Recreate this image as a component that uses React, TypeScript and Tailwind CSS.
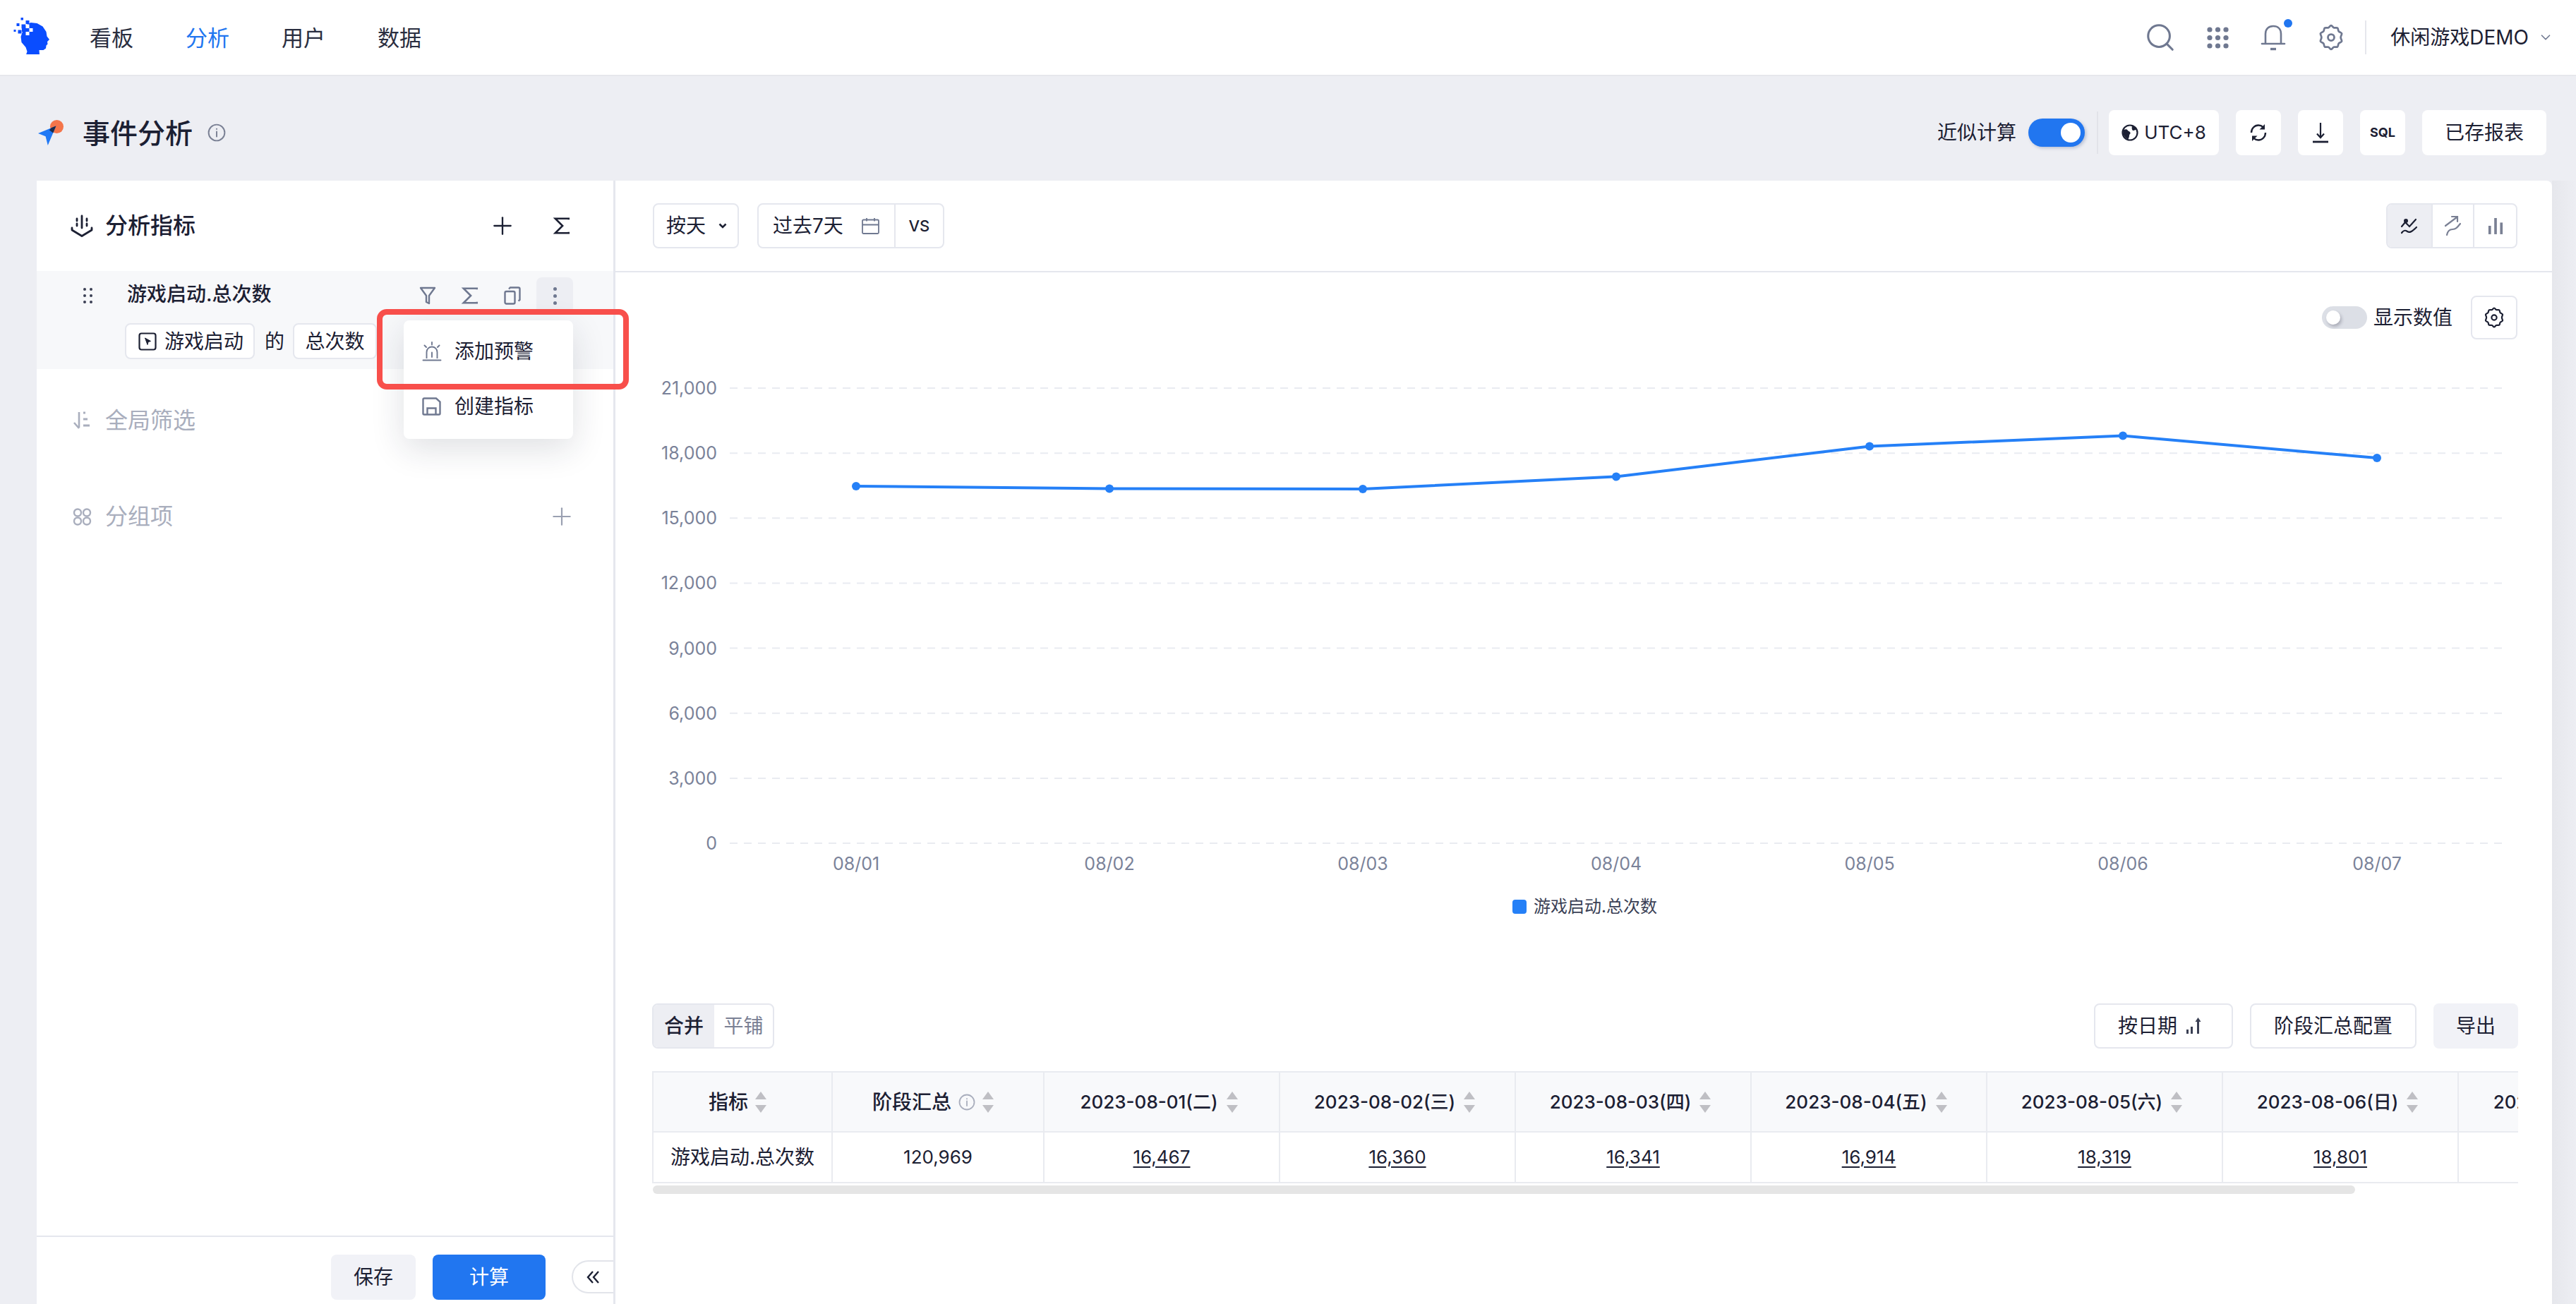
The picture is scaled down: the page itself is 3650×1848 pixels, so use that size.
import { ChevronDown, Plus, Search } from "lucide-react";

const points = [
  { label: "08/01", x: 341, y: 208 },
  { label: "08/02", x: 700, y: 211.5 },
  { label: "08/03", x: 1059, y: 212 },
  { label: "08/04", x: 1418, y: 194.5 },
  { label: "08/05", x: 1777, y: 151.5 },
  { label: "08/06", x: 2136, y: 136.5 },
  { label: "08/07", x: 2496, y: 168 },
];

const yTicks = ["21,000", "18,000", "15,000", "12,000", "9,000", "6,000", "3,000", "0"];

const dateColumns = [
  { date: "2023-08-01(二)", value: "16,467" },
  { date: "2023-08-02(三)", value: "16,360" },
  { date: "2023-08-03(四)", value: "16,341" },
  { date: "2023-08-04(五)", value: "16,914" },
  { date: "2023-08-05(六)", value: "18,319" },
  { date: "2023-08-06(日)", value: "18,801" },
  { date: "2023-08-07(一)", value: "17,778" },
];

function Logo() {
  return (
    <svg width="60" height="60" viewBox="8 2 60 60" className="mb-[12px] shrink-0">
      <path
        fill="#0a4dff"
        d="M27 62.500h19l-.5-6.500h6l3.500-2.500.5-4 2-2-.5-3.500 3-3-3.500-4.500-1-6.500-5-7.500-8-4.500-9-1-6 3-5 8-3 9 1 8 6 7 2 6z"
      />
      <g fill="#0a4dff">
        <rect x="19.500" y="10" width="3.500" height="3.500" />
        <rect x="13.500" y="18" width="4" height="4" />
        <rect x="9.500" y="27" width="3" height="3" />
        <rect x="15.500" y="27.500" width="5" height="5" />
        <rect x="26.500" y="14" width="5" height="5" />
        <rect x="20.500" y="19.500" width="6" height="6" />
      </g>
      <g fill="#fff">
        <rect x="26.500" y="19.500" width="5" height="5.500" />
        <rect x="31.500" y="25" width="5" height="5" />
        <rect x="26.500" y="30" width="5" height="5" />
      </g>
      <rect x="21" y="25" width="5.500" height="5" fill="#0a4dff" />
    </svg>
  );
}

function PageIcon() {
  return (
    <svg width="36" height="36" viewBox="0 0 34 34" className="shrink-0">
      <circle cx="25" cy="9" r="9" fill="#f4754a" />
      <path d="M0 18 24 8l-11 26-3-12z" fill="#1f78f5" />
      <path d="M18 10.500 24 8l-4 9.500-5-4z" fill="#1c2b4a" />
    </svg>
  );
}

function InfoIcon({ size = 26, color = "#7a8094" }: { size?: number; color?: string }) {
  return (
    <svg width={size} height={size} viewBox="0 0 24 24" fill="none" stroke={color} strokeWidth="1.800" className="shrink-0">
      <circle cx="12" cy="12" r="10.500" />
      <path d="M12 10.500V17" strokeLinecap="round" />
      <circle cx="12" cy="7.200" r="1" fill={color} stroke="none" />
    </svg>
  );
}

function GearIcon({ size = 40, color = "#6f7890" }: { size?: number; color?: string }) {
  return (
    <svg width={size} height={size} viewBox="0 0 32 32" fill="none" stroke={color} strokeWidth="2.200" strokeLinejoin="round">
      <path d="M16 2.500c1.200 0 1.800 2 3 2.500 1.400.6 3.200-.4 4.200.3 1 .8.6 2.800 1.400 3.800.9 1.100 3 1.200 3.400 2.400.4 1.200-1.100 2.600-1.100 4.500s1.500 3.300 1.100 4.500c-.4 1.200-2.500 1.300-3.400 2.400-.8 1-.4 3-1.400 3.800-1 .7-2.800-.3-4.200.3-1.200.5-1.800 2.500-3 2.500s-1.800-2-3-2.500c-1.400-.6-3.200.4-4.200-.3-1-.8-.6-2.800-1.400-3.800-.9-1.100-3-1.200-3.400-2.400-.4-1.200 1.100-2.600 1.100-4.500s-1.500-3.300-1.100-4.500c.4-1.200 2.500-1.300 3.400-2.400.8-1 .4-3 1.400-3.800 1-.7 2.800.3 4.200-.3 1.200-.5 1.800-2.500 3-2.500z" />
      <circle cx="16" cy="16" r="3.600" />
    </svg>
  );
}

function GridDots() {
  const dots = [];
  for (let r = 0; r < 3; r++) {
    for (let c = 0; c < 3; c++) {
      dots.push(<circle key={`${r}-${c}`} cx={4 + c * 11.5} cy={4 + r * 11.5} r="3.600" fill="#6f7890" />);
    }
  }
  return (
    <svg width="31" height="31" viewBox="0 0 31 31">
      {dots}
    </svg>
  );
}

function BellIcon() {
  return (
    <div className="relative h-[38px] w-[36px]">
      <svg width="36" height="38" viewBox="0 0 36 38" fill="none" stroke="#6f7890" strokeWidth="2.600">
        <path d="M7 27V14C7 7 11.500 3 18 3s11 4 11 11v13" />
        <path d="M2 28h32" strokeLinecap="round" />
        <path d="M14 35.500h8" strokeWidth="3.400" />
      </svg>
      <span className="absolute right-[-9px] top-[-7px] h-[12px] w-[12px] rounded-full bg-[#2176f0]" />
    </div>
  );
}

function Funnel({ color }: { color: string }) {
  return (
    <svg width="24" height="26" viewBox="0 0 24 26" fill="none" stroke={color} strokeWidth="2.400" strokeLinejoin="round">
      <path d="M2 2h20l-8 11v11l-4-2v-9z" />
    </svg>
  );
}

function Sigma({ color, size = 26 }: { color: string; size?: number }) {
  return (
    <svg width={size} height={size} viewBox="0 0 24 24" fill="none" stroke={color} strokeWidth="2.400" strokeLinejoin="miter">
      <path d="M21 4V2.500H3.500L13 12l-9.500 9.500H21V20" />
    </svg>
  );
}

function CopyIcon() {
  return (
    <svg width="24" height="26" viewBox="0 0 24 26" fill="none" stroke="#6f7890" strokeWidth="2.400">
      <rect x="1.500" y="7" width="14" height="17.500" rx="2" />
      <path d="M7 3.500 9 1.500h11.500a2 2 0 0 1 2 2V19l-2 1.500" />
    </svg>
  );
}

function MetricIcon({ color }: { color: string }) {
  return (
    <svg width="32" height="32" viewBox="0 0 32 32" fill="none" stroke={color} strokeWidth="2.800" strokeLinecap="round">
      <path d="M16 2v17" />
      <path d="M9 6v3M9 13v3M23 6v3M23 13v3" />
      <path d="M2 19v3l14 8.500L30 22v-3" strokeLinejoin="round" />
    </svg>
  );
}

function FilterSortIcon() {
  return (
    <svg width="26" height="28" viewBox="0 0 26 28" fill="none" stroke="#a9aebd" strokeWidth="2.600">
      <path d="M9 2v22" />
      <path d="M2 17l7 8" />
      <path d="M15 3h3M15 12h6M15 21h9" strokeWidth="3" />
    </svg>
  );
}

function GroupIcon() {
  return (
    <svg width="27" height="25" viewBox="0 0 27 25" fill="none" stroke="#a9aebd" strokeWidth="2.400">
      <circle cx="7" cy="6.500" r="5" />
      <circle cx="20" cy="6.500" r="5" />
      <circle cx="7" cy="18.500" r="5" />
      <circle cx="20" cy="18.500" r="5" />
    </svg>
  );
}

function EventIcon() {
  return (
    <svg width="26" height="26" viewBox="0 0 26 26" fill="none" stroke="#1c2033" strokeWidth="2.200">
      <rect x="1.500" y="1.500" width="23" height="23" rx="3" />
      <path d="M9.500 8l8 4.500-3.500 1-1 4z" fill="#1c2033" strokeWidth="1" strokeLinejoin="round" />
    </svg>
  );
}

function AlarmIcon() {
  return (
    <svg width="28" height="28" viewBox="0 0 28 28" fill="none" stroke="#6f7890" strokeWidth="1.900">
      <path d="M6.500 24V15a7.500 7.500 0 0 1 15 0v9" />
      <path d="M1.500 26.500h25M14 15.500V22M14 1v3.500M3.500 5.500 6 8M24.500 5.500 22 8" strokeLinecap="round" />
    </svg>
  );
}

function SaveIcon() {
  return (
    <svg width="27" height="26" viewBox="0 0 27 26" fill="none" stroke="#6f7890" strokeWidth="2.400">
      <path d="M1.500 3a1.500 1.500 0 0 1 1.500-1.500h17l5.500 5V23a1.500 1.500 0 0 1-1.500 1.500H3A1.500 1.500 0 0 1 1.500 23z" />
      <path d="M7.500 24v-8.500h12V24" />
    </svg>
  );
}

function GlobeIcon() {
  return (
    <svg width="24" height="24" viewBox="0 0 24 24" fill="none" className="shrink-0">
      <circle cx="12" cy="12" r="10.500" stroke="#1c2033" strokeWidth="2.200" />
      <path d="M3 8c3-1 5-1 6 1 1 1.500 3 1 3.500 3s-1.500 2-1.500 4-1 5-2 5.500C6 20 3 17 2 13zM15 2c2 .5 5 2.500 6.500 5.500L17 9c-1.500 0-3-1.500-2-7z" fill="#1c2033" />
    </svg>
  );
}

function RefreshIcon() {
  return (
    <svg width="26" height="28" viewBox="0 0 26 28" fill="none" stroke="#1c2033" strokeWidth="2.400">
      <path d="M3 14C3 8 7.500 3.500 13 3.500c2.500 0 5 1 6.500 2.500" />
      <path d="M23 14c0 6-4.500 10.500-10 10.500-2.500 0-5-1-6.500-2.500" />
      <path d="M22 2v7.500h-7.500z" fill="#1c2033" stroke="none" />
      <path d="M4 26v-7.500h7.500z" fill="#1c2033" stroke="none" />
    </svg>
  );
}

function DownloadIcon() {
  return (
    <svg width="24" height="30" viewBox="0 0 24 30" fill="none" stroke="#1c2033" strokeWidth="2.200">
      <path d="M12 1v20" />
      <path d="M7 16.500 12 22l5-5.500" />
      <path d="M1 28h22" strokeWidth="2.800" />
    </svg>
  );
}

function CalendarIcon() {
  return (
    <svg width="25" height="24" viewBox="0 0 25 24" fill="none" stroke="#6f7890" strokeWidth="1.800">
      <rect x="1" y="3.500" width="23" height="19.500" rx="1.500" />
      <path d="M1 10.500h23M7 1v4.500M18 1v4.500" />
    </svg>
  );
}

function LineChartIcon() {
  return (
    <svg width="26" height="26" viewBox="0 0 26 26" fill="none" stroke="#1c2033" strokeWidth="2.200" strokeLinecap="round">
      <path d="M2 14 7 8l6 6 9-10" />
      <path d="M2 23c3-4 5-4 8-2s6 1 13-6" />
      <circle cx="8" cy="6" r="3" fill="#1c2033" stroke="none" />
    </svg>
  );
}

function TrendIcon() {
  return (
    <svg width="26" height="30" viewBox="0 0 26 30" fill="none" stroke="#7a8094" strokeWidth="2.200" strokeLinecap="round">
      <path d="M2 15 18 3M11 2h8v7" />
      <path d="M4 28c1-5 3-8 8-8s7-3 11-8" />
    </svg>
  );
}

function BarIcon() {
  return (
    <svg width="22" height="26" viewBox="0 0 24 26" fill="#7a8094">
      <rect x="1" y="13" width="4" height="13" />
      <rect x="10" y="1" width="4" height="25" />
      <rect x="19" y="8" width="4" height="18" />
    </svg>
  );
}

function DateOrderIcon() {
  return (
    <svg width="22" height="24" viewBox="0 0 22 24" fill="#3b4054" className="shrink-0">
      <rect x="1" y="17" width="3" height="6" />
      <rect x="7" y="13" width="3" height="10" />
      <rect x="16" y="5" width="3" height="18" />
      <path d="M17.500 0l4 6h-8z" />
    </svg>
  );
}

function SortCaret() {
  return (
    <svg width="16" height="30" viewBox="0 0 16 30" fill="#bfbfc4" className="shrink-0">
      <path d="M8 0l8 11H0zM8 30 0 19h16z" />
    </svg>
  );
}

function ToolButton({ children }: { children: React.ReactNode }) {
  return (
    <button className="flex h-[64px] w-[64px] items-center justify-center rounded-lg bg-white">
      {children}
    </button>
  );
}

function Chart() {
  const line = points.map((p) => `${p.x},${p.y}`).join(" ");
  return (
    <svg viewBox="0 0 2744 941" className="block h-[941px] w-[2744px] font-[Inter,'Noto_Sans_CJK_SC',sans-serif]">
      {yTicks.map((t, i) => {
        const y = 69 + i * 92.15;
        return (
          <g key={t}>
            <line x1="162" x2="2676" y1={y} y2={y} stroke="#e9ebf1" strokeWidth="2" strokeDasharray="11 9" />
            <text x="144" y={y + 9} textAnchor="end" fontSize="25" fill="#7a8299">
              {t}
            </text>
          </g>
        );
      })}
      <polyline points={line} fill="none" stroke="#2580f7" strokeWidth="4" />
      {points.map((p) => (
        <g key={p.label}>
          <circle cx={p.x} cy={p.y} r="6" fill="#2580f7" />
          <text x={p.x} y="752" textAnchor="middle" fontSize="25" fill="#7a8299">
            {p.label}
          </text>
        </g>
      ))}
    </svg>
  );
}

function Legend() {
  return (
    <div className="absolute left-[1271px] top-[1014px] flex items-center gap-[10px] text-[24px] leading-[30px] text-[#3a3f55]">
      <span className="h-[20px] w-[20px] rounded-[4px] bg-[#2580f7]" />
      游戏启动.总次数
    </div>
  );
}

export default function App() {
  return (
    <div className="flex h-[1848px] w-[3650px] flex-col overflow-hidden bg-[#edeef3] font-[Inter,'Noto_Sans_CJK_SC',sans-serif] text-[#1c2033]">
      <header className="flex h-[108px] shrink-0 items-center border-b-2 border-[#e6e7ec] bg-white pl-[18px] pr-[32px]">
        <Logo />
        <nav className="ml-[49px] flex gap-[74px] text-[31px] leading-none text-[#2a2e40]">
          <span>看板</span>
          <span className="text-[#2176f0]">分析</span>
          <span>用户</span>
          <span>数据</span>
        </nav>
        <div className="ml-auto flex items-center">
          <Search size={46} color="#6f7890" strokeWidth={1.6} />
          <div className="ml-[43px]">
            <GridDots />
          </div>
          <div className="ml-[45px]">
            <BellIcon />
          </div>
          <div className="ml-[44px]">
            <GearIcon />
          </div>
          <div className="ml-[28px] h-[48px] w-[2px] bg-[#e6e7ec]" />
          <span className="ml-[34px] text-[28px] leading-none">休闲游戏DEMO</span>
          <ChevronDown size={22} color="#6f7890" strokeWidth={1.8} className="ml-[13px]" />
        </div>
      </header>

      <div className="flex h-[148px] shrink-0 items-center pl-[54px] pr-[42px] pt-[12px]">
        <PageIcon />
        <h1 className="ml-[27px] text-[39px] font-medium leading-none">事件分析</h1>
        <div className="ml-[21px]">
          <InfoIcon />
        </div>
        <div className="ml-auto flex items-center">
          <span className="text-[28px] leading-none">近似计算</span>
          <div className="ml-[17px] flex h-[40px] w-[80px] items-center justify-end rounded-full bg-[#2176f0] pr-[6px] shadow-[2px_2px_4px_rgba(30,60,120,0.25)]">
            <span className="h-[28px] w-[28px] rounded-full bg-white" />
          </div>
          <div className="ml-[17px] h-[60px] w-[2px] bg-[#e2e3e9]" />
          <div className="ml-[15px] flex items-center gap-[24px]">
            <button className="flex h-[64px] w-[156px] items-center justify-center gap-[8px] rounded-lg bg-white text-[26px] leading-none">
              <GlobeIcon />
              UTC+8
            </button>
            <ToolButton>
              <RefreshIcon />
            </ToolButton>
            <ToolButton>
              <DownloadIcon />
            </ToolButton>
            <ToolButton>
              <span className="text-[18px] font-bold leading-none">SQL</span>
            </ToolButton>
            <button className="h-[64px] w-[176px] rounded-lg bg-white text-[28px] leading-none">已存报表</button>
          </div>
        </div>
      </div>

      <main className="ml-[52px] flex min-h-0 flex-1">
        <aside className="relative z-10 flex w-[820px] shrink-0 flex-col border-r-[3px] border-[#e5e7ee] bg-white">
          <div className="flex h-[128px] items-center pl-[48px] pr-[60px]">
            <MetricIcon color="#1c2033" />
            <span className="ml-[17px] text-[32px] font-medium leading-none">分析指标</span>
            <Plus size={40} strokeWidth={1.4} className="ml-auto" />
            <div className="ml-[51px]">
              <Sigma color="#1c2033" />
            </div>
          </div>

          <div className="h-[139px] bg-[#f7f8fa] pt-[9px]">
            <div className="flex h-[52px] items-center pl-[66px] pr-[57px]">
              <svg width="13" height="24" viewBox="0 0 13 24" fill="#3b4054">
                <circle cx="2" cy="3" r="2" />
                <circle cx="11" cy="3" r="2" />
                <circle cx="2" cy="12" r="2" />
                <circle cx="11" cy="12" r="2" />
                <circle cx="2" cy="21" r="2" />
                <circle cx="11" cy="21" r="2" />
              </svg>
              <span className="mb-[4px] ml-[49px] text-[28px] font-medium leading-none">游戏启动.总次数</span>
              <div className="ml-auto flex items-center">
                <Funnel color="#6f7890" />
                <div className="ml-[35px]">
                  <Sigma color="#6f7890" />
                </div>
                <div className="ml-[35px]">
                  <CopyIcon />
                </div>
                <div className="ml-[22px] flex h-[52px] w-[52px] flex-col items-center justify-center gap-[5px] rounded-lg bg-[#edeef3]">
                  <span className="h-[5px] w-[5px] rounded-full bg-[#6f7890]" />
                  <span className="h-[5px] w-[5px] rounded-full bg-[#6f7890]" />
                  <span className="h-[5px] w-[5px] rounded-full bg-[#6f7890]" />
                </div>
              </div>
            </div>
            <div className="mt-[13px] flex items-center pl-[125px] text-[28px] leading-none">
              <div className="flex h-[51px] w-[184px] items-center gap-[11px] rounded-lg border-2 border-[#e5e7ee] bg-white pl-[17px]">
                <EventIcon />
                游戏启动
              </div>
              <span className="ml-[14px]">的</span>
              <div className="ml-[12px] flex h-[51px] w-[119px] items-center justify-center rounded-lg border-2 border-[#e5e7ee] bg-white">
                总次数
              </div>
            </div>
          </div>

          <div className="mt-[5px] flex h-[136px] items-center pl-[51px] text-[32px] leading-none text-[#a9aebd]">
            <FilterSortIcon />
            <span className="ml-[20px]">全局筛选</span>
          </div>
          <div className="flex h-[136px] items-center pl-[51px] pr-[53px] text-[32px] leading-none text-[#a9aebd]">
            <GroupIcon />
            <span className="ml-[19px]">分组项</span>
            <Plus size={40} color="#9aa0b1" strokeWidth={1.3} className="ml-auto" />
          </div>

          <div className="mt-auto flex h-[97px] justify-end gap-[24px] border-t-2 border-[#e5e7ee] pr-0 pt-[25px] text-[28px] leading-none">
            <button className="h-[64px] w-[120px] rounded-lg bg-[#f1f2f7]">保存</button>
            <button className="h-[64px] w-[160px] rounded-lg bg-[#2176f0] text-white">计算</button>
            <button className="ml-[13px] mt-[8px] flex h-[47px] w-[59px] items-center justify-center rounded-l-full border-2 border-r-0 border-[#e2e4ea] bg-white">
              <svg width="20" height="20" viewBox="0 0 20 20" fill="none" stroke="#1c2033" strokeWidth="2.400">
                <path d="M9 2 2 10l7 8M17 2l-7 8 7 8" />
              </svg>
            </button>
          </div>

          <div className="absolute left-[520px] top-[198px] flex h-[168px] w-[240px] flex-col justify-between rounded-lg bg-white px-[26px] pb-[32px] pt-[30px] text-[28px] leading-none shadow-[0_14px_48px_rgba(30,35,60,0.14)]">
            <div className="flex items-center gap-[18px]">
              <AlarmIcon />
              添加预警
            </div>
            <div className="flex items-center gap-[19px]">
              <SaveIcon />
              创建指标
            </div>
          </div>
          <div className="absolute left-[482px] top-[182px] h-[114px] w-[357px] rounded-[14px] border-[8px] border-[#f84f4b]" />
        </aside>

        <section className="relative w-[2744px] shrink-0 rounded-tr-lg bg-white">
          <div className="flex h-[130px] items-center border-b-2 border-[#e5e7ee] pl-[53px] pr-[49px] text-[28px] leading-none">
            <div className="flex h-[64px] w-[122px] items-center rounded-lg border-2 border-[#e5e7ee] pl-[17px]">
              按天
              <svg width="12" height="8" viewBox="0 0 12 8" fill="none" stroke="#1c2033" strokeWidth="2.600" className="ml-[18px]">
                <path d="M1.500 1.500 6 6l4.500-4.500" />
              </svg>
            </div>
            <div className="ml-[26px] flex h-[64px] w-[265px] items-center rounded-lg border-2 border-[#e5e7ee]">
              <span className="ml-[20px]">过去7天</span>
              <div className="ml-[26px]">
                <CalendarIcon />
              </div>
              <div className="ml-[21px] flex h-full flex-1 items-center justify-center border-l-2 border-[#e5e7ee] text-[22px] font-medium">VS</div>
            </div>
            <div className="ml-auto flex h-[64px] w-[186px] overflow-hidden rounded-lg border-2 border-[#e5e7ee]">
              <div className="flex w-[62px] items-center justify-center bg-[#edeef3]">
                <LineChartIcon />
              </div>
              <div className="flex w-[61px] items-center justify-center border-x-2 border-[#e5e7ee]">
                <TrendIcon />
              </div>
              <div className="flex flex-1 items-center justify-center">
                <BarIcon />
              </div>
            </div>
          </div>

          <div className="flex items-center justify-end pr-[49px] pt-[33px]">
            <div className="flex h-[32px] w-[64px] items-center rounded-full bg-[#dcdfe6] pl-[6px]">
              <span className="h-[20px] w-[20px] rounded-full bg-white shadow-[2px_3px_4px_rgba(60,60,80,0.3)]" />
            </div>
            <span className="ml-[9px] text-[28px] leading-none">显示数值</span>
            <div className="ml-[26px] flex h-[62px] w-[66px] items-center justify-center rounded-lg border-2 border-[#e5e7ee]">
              <GearIcon size={32} color="#1c2033" />
            </div>
          </div>

          <Chart />
          <Legend />

          <div className="flex h-[64px] items-stretch pl-[52px] pr-[48px] text-[28px] leading-none">
            <div className="flex w-[173px] overflow-hidden rounded-lg border-2 border-[#e5e7ee]">
              <div className="flex w-[86px] items-center justify-center bg-[#edeef3] font-medium">合并</div>
              <div className="flex flex-1 items-center justify-center text-[#7a8094]">平铺</div>
            </div>
            <button className="ml-auto flex w-[197px] items-center gap-[12px] rounded-lg border-2 border-[#e5e7ee] pl-[32px]">
              按日期
              <DateOrderIcon />
            </button>
            <button className="ml-[24px] w-[236px] rounded-lg border-2 border-[#e5e7ee]">阶段汇总配置</button>
            <button className="ml-[24px] w-[120px] rounded-lg bg-[#f1f2f7]">导出</button>
          </div>

          <div className="ml-[52px] mt-[32px] w-[2644px] overflow-hidden">
            <table className="w-[2892px] table-fixed border-separate border-spacing-0 border-l-2 border-t-2 border-[#e9ebf0] text-[28px] leading-none">
              <colgroup>
                <col className="w-[254px]" />
                <col className="w-[300px]" />
                {dateColumns.map((c) => (
                  <col key={c.date} className="w-[334px]" />
                ))}
              </colgroup>
              <thead>
                <tr className="h-[85px] bg-[#f8f9fb]">
                  <th className="border-b-2 border-r-2 border-[#e9ebf0] pr-[14px] font-medium">
                    <div className="flex items-center justify-center gap-[10px]">
                      指标
                      <SortCaret />
                    </div>
                  </th>
                  <th className="border-b-2 border-r-2 border-[#e9ebf0] pr-[14px] font-medium">
                    <div className="flex items-center justify-center gap-[10px]">
                      阶段汇总
                      <InfoIcon size={24} color="#a9aebd" />
                      <SortCaret />
                    </div>
                  </th>
                  {dateColumns.map((c) => (
                    <th key={c.date} className="border-b-2 border-r-2 border-[#e9ebf0] pr-[8px] text-[26px] font-medium">
                      <div className="flex items-center justify-center gap-[12px]">
                        {c.date}
                        <SortCaret />
                      </div>
                    </th>
                  ))}
                </tr>
              </thead>
              <tbody>
                <tr className="h-[72px] text-center text-[26px]">
                  <td className="border-b-2 border-r-2 border-[#e9ebf0] text-[28px]">游戏启动.总次数</td>
                  <td className="border-b-2 border-r-2 border-[#e9ebf0]">120,969</td>
                  {dateColumns.map((c) => (
                    <td key={c.date} className="border-b-2 border-r-2 border-[#e9ebf0] underline underline-offset-4">
                      {c.value}
                    </td>
                  ))}
                </tr>
              </tbody>
            </table>
          </div>
          <div className="ml-[53px] mt-[3px] h-[12px] w-[2412px] rounded-full bg-[#e5e5e5]" />
        </section>

        <div className="flex-1 bg-gradient-to-r from-[#e6e7ec] to-[#edeef3]" />
      </main>
    </div>
  );
}
